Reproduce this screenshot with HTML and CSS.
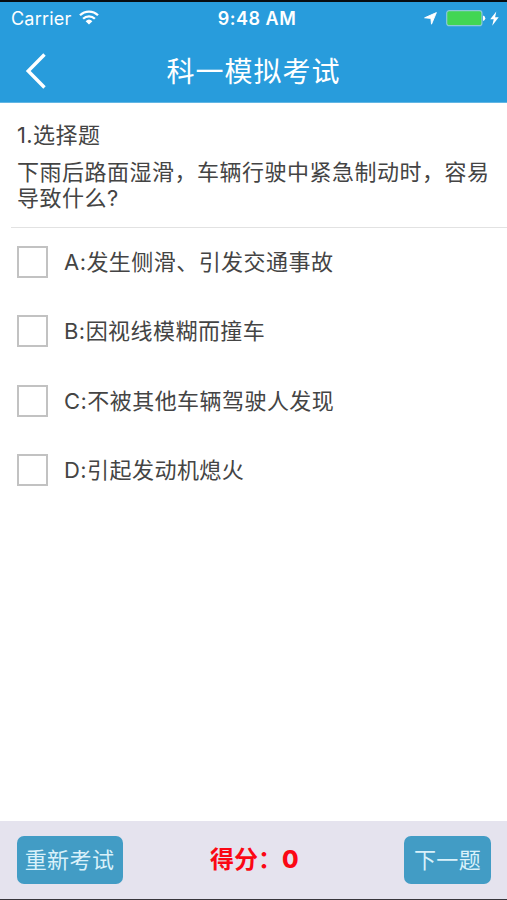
FILE: index.html
```html
<!DOCTYPE html>
<html lang="zh-CN">
<head>
<meta charset="utf-8">
<title>科一模拟考试</title>
<link rel="stylesheet" href="styles.css">
</head>
<body>
<div class="app">
  <header class="header">
    <div class="status">
      <div class="status-left">
        <span class="carrier">Carrier</span>
        <svg class="wifi" width="20" height="15" viewBox="0 0 20 15" fill="none" stroke="#fff" stroke-width="2.3"><path d="M1 5.3a12.8 12.8 0 0 1 18 0M4.1 8.7a8.4 8.4 0 0 1 11.8 0"/><path d="M6.6 11.2a5 5 0 0 1 6.8 0L10 14.6z" fill="#fff" stroke="none"/></svg>
      </div>
      <span class="time">9:48 AM</span>
      <div class="status-right">
        <svg width="13" height="13" viewBox="0 0 13 13" fill="#fff" stroke="#fff" stroke-width=".9"><path d="M12.4.6 7.5 12.2 6.9 6.4.6 5.8z"/></svg>
        <svg class="battery" width="40" height="17" viewBox="0 0 40 17"><rect x=".7" y=".7" width="35.2" height="15" rx="2.5" fill="#42d653" stroke="#8bc9d8" stroke-width="1.2"/><path d="M37 5.5q2.3.6 2.3 2.7T37 10.9z" fill="#fff"/></svg>
        <svg width="9" height="15" viewBox="0 0 9 15" fill="#fff"><path d="M6.3.4.2 8.3h3.5L2.2 14.7 8.7 6.3H5.1z"/></svg>
      </div>
    </div>
    <div class="nav">
      <svg class="back" width="22" height="36" viewBox="0 0 22 36" fill="none" stroke="#fff" stroke-width="3.4"><path d="M19.5 1.5 3.2 18 19.5 34.5"/></svg>
      <h1 class="title">科一模拟考试</h1>
    </div>
  </header>
  <main class="main">
    <section class="question">
      <div class="kind">1.选择题</div>
      <p class="text">下雨后路面湿滑，车辆行驶中紧急制动时，容易<br>导致什么?</p>
    </section>
    <div class="options">
      <div class="option"><span class="box"></span><span class="label">A:发生侧滑、引发交通事故</span></div>
      <div class="option"><span class="box"></span><span class="label">B:因视线模糊而撞车</span></div>
      <div class="option"><span class="box"></span><span class="label">C:不被其他车辆驾驶人发现</span></div>
      <div class="option"><span class="box"></span><span class="label">D:引起发动机熄火</span></div>
    </div>
  </main>
  <footer class="footer">
    <button class="btn restart">重新考试</button>
    <div class="score">得分：<span class="num">0</span></div>
    <button class="btn next">下一题</button>
  </footer>
</div>
</body>
</html>
```

FILE: styles.css
```css
* { box-sizing: border-box; }
body { margin: 0; background: #fff; font-family: Inter, "Noto Sans CJK SC", sans-serif; color: #444; }
.app { height: 900px; display: flex; flex-direction: column; border-top: 2px solid #080c10; border-bottom: 1px solid #37353b; }
.header { height: 101px; background: #289cdc; color: #fff; border-bottom: 1px solid #62b6e4; }
.status { height: 32px; display: grid; grid-template-columns: 1fr auto 1fr; align-items: center; padding: 0 8px 0 11px; }
.status-left, .status-right { display: flex; align-items: center; }
.status-left { gap: 8px; }
.carrier { padding-top: 1px; font-size: 18px; line-height: 32px; letter-spacing: .2px; }
.wifi { margin-top: -2px; }
.time { padding: 1px 0 0 4px; font-size: 18px; font-weight: 600; line-height: 32px; letter-spacing: .5px; }
.status-right { justify-content: flex-end; }
.battery { margin: 0 4px 0 9px; }
.nav { height: 68px; display: grid; grid-template-columns: 50px 1fr 50px; align-items: center; }
.back { margin-left: 25px; margin-top: 5px; }
.title { margin: 7px 0 0; font-size: 28px; font-weight: 400; line-height: 40px; letter-spacing: 1px; text-align: center; }
.main { flex: 1; }
.question { margin-left: 11px; padding: 17px 0 0 6px; height: 125px; border-bottom: 1px solid #e2e2e2; }
.kind { font-size: 22px; line-height: 30px; letter-spacing: .4px; }
.text { margin: 9px 0 0; font-size: 22px; line-height: 26px; letter-spacing: .5px; white-space: nowrap; }
.options { padding-left: 17px; margin-top: -1px; }
.option { height: 69.5px; display: flex; align-items: center; gap: 16px; }
.box { width: 31px; height: 32px; border: 2px solid #c2c2c2; }
.label { font-size: 22px; line-height: 32px; letter-spacing: .45px; }
.footer { height: 78px; background: #e5e3ee; display: grid; grid-template-columns: 106px 1fr 87px; align-items: center; padding: 0 16px 0 17px; }
.btn { height: 48px; padding: 1px 0 0; border: 0; border-radius: 7px; background: #429cc5; color: #d9f1fa; font: 22px/47px Inter, "Noto Sans CJK SC", sans-serif; letter-spacing: .4px; white-space: nowrap; }
.restart { text-indent: -1px; }
.score { padding-left: 87px; color: #fb0814; font-size: 24px; font-weight: 700; line-height: 40px; }
.num { font-weight: 800; }
```
